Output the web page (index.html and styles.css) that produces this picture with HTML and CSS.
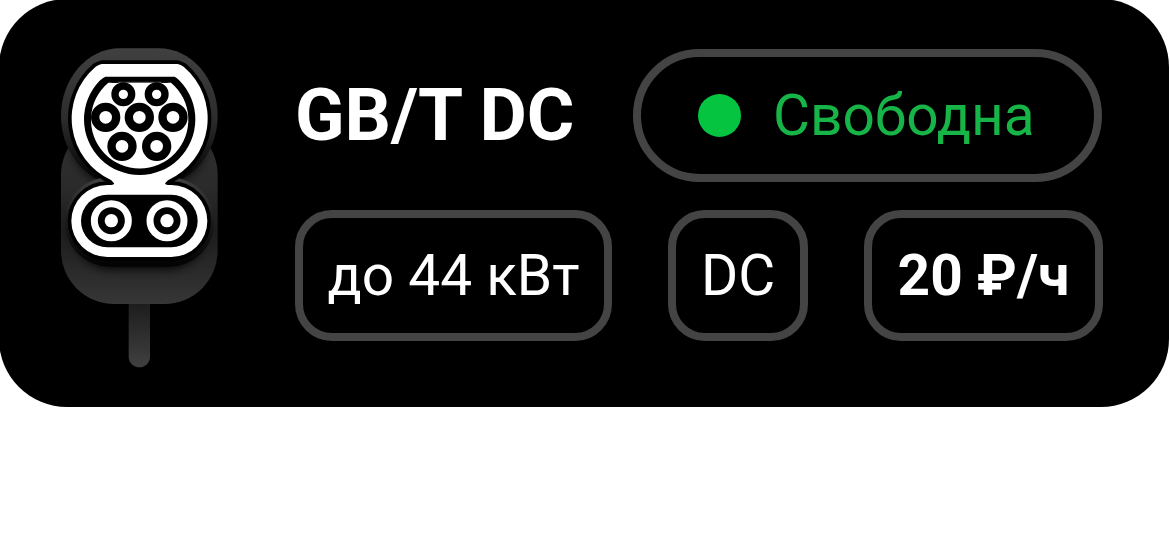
FILE: index.html
```
<!DOCTYPE html>
<html lang="ru">
<head>
    <meta charset="UTF-8">
    <meta name="viewport" content="width=device-width, initial-scale=1.0">
    <title>GB/T DC</title>
    <link rel="stylesheet" href="styles.css">
</head>
<body>
    <div class="card">
        <svg class="plug" viewBox="0 0 600 1020">
            <defs>
                <linearGradient id="head" x1="0" y1="0" x2="0" y2="1">
                    <stop offset="0" stop-color="#404040"/>
                    <stop offset="0.5" stop-color="#2c2c2c"/>
                    <stop offset="0.9" stop-color="#060606"/>
                </linearGradient>
                <linearGradient id="body" x1="0" y1="0" x2="0" y2="1">
                    <stop offset="0" stop-color="#303030"/>
                    <stop offset="0.35" stop-color="#2b2b2b"/>
                    <stop offset="0.6" stop-color="#1c1c1c"/>
                    <stop offset="1" stop-color="#363636"/>
                </linearGradient>
                <linearGradient id="plate" x1="0" y1="0" x2="0" y2="1">
                    <stop offset="0" stop-color="#404040"/>
                    <stop offset="0.5" stop-color="#1b1b1b"/>
                    <stop offset="1" stop-color="#020202"/>
                </linearGradient>
                <linearGradient id="cable" x1="0" y1="0" x2="0" y2="1">
                    <stop offset="0" stop-color="#1b1b1b"/>
                    <stop offset="1" stop-color="#404040"/>
                </linearGradient>
                <filter id="soft" x="-30%" y="-30%" width="160%" height="160%">
                    <feGaussianBlur stdDeviation="16"/>
                </filter>
                <clipPath id="bodyClip">
                    <rect x="63" y="245" width="470" height="547" rx="160"/>
                </clipPath>
            </defs>

            <!-- cable and body -->
            <path d="M266 780H330V950A32 32 0 0 1 266 950Z" fill="url(#cable)"/>
            <rect x="63" y="245" width="470" height="547" rx="160" fill="url(#body)"/>
            <g clip-path="url(#bodyClip)">
                <ellipse cx="298" cy="320" rx="195" ry="130" fill="#000" filter="url(#soft)"/>
                <rect x="105" y="470" width="386" height="215" rx="107" fill="#000" filter="url(#soft)"/>
            </g>
            <path d="M240 25H356C456 25 533 118 533 228C533 350 440 450 298 450C156 450 63 350 63 228C63 118 140 25 240 25Z" fill="url(#head)"/>
            <rect x="74" y="412" width="449" height="268" rx="134" fill="url(#plate)"/>

            <!-- socket shell -->
            <path class="shell" d="M185 72H413Q422 74 431 80A204 204 0 0 1 384 421L375 430Q376 435 384 435H394A108 108 0 0 1 394 651H202A108 108 0 0 1 202 435H214Q224 434 222 430L214 421A204 204 0 0 1 167 80Q176 74 185 72Z"/>
            <path d="M196 110H404Q412 114 419 122A167 167 0 1 1 179 122Q187 114 196 110Z"/>
            <path d="M205 128H393A146 146 0 1 1 205 128Z" fill="#fff"/>
            <path d="M215 121H383" stroke="#000" stroke-width="14"/>
            <path d="M234 127H364" stroke="#777" stroke-width="3"/>

            <!-- pins -->
            <g fill="#fff" stroke="#000">
                <g stroke-width="22">
                    <circle cx="250" cy="163" r="25"/>
                    <circle cx="350" cy="163" r="25"/>
                </g>
                <g stroke-width="25">
                    <circle cx="197" cy="232" r="31.5"/>
                    <circle cx="298" cy="232" r="31.5"/>
                    <circle cx="399" cy="232" r="31.5"/>
                    <circle cx="246" cy="319" r="31.5"/>
                    <circle cx="350" cy="319" r="31.5"/>
                </g>
            </g>

            <rect x="123" y="464" width="350" height="158" rx="79"/>
            <g stroke="#fff" stroke-width="21">
                <circle cx="214" cy="542" r="51"/>
                <circle cx="381" cy="542" r="51"/>
            </g>
            <circle cx="214" cy="542" r="20" fill="#fff"/>
            <circle cx="381" cy="542" r="20" fill="#fff"/>
        </svg>

        <div class="info">
            <div class="top">
                <h1>GB/T DC</h1>
                <div class="status">
                    <span class="dot"></span>
                    <span class="status-text">Свободна</span>
                </div>
            </div>
            <div class="chips">
                <div class="chip power"><span>до 44 кВт</span></div>
                <div class="chip current"><span>DC</span></div>
                <div class="chip price"><span>20 ₽/ч</span></div>
            </div>
        </div>
    </div>
</body>
</html>
```
FILE: styles.css
```
body {
    margin: 0;
    background-color: #fff;
    font-family: 'Roboto', sans-serif;
    overflow: hidden;
}

.card {
    display: flex;
    box-sizing: border-box;
    width: 1170px;
    height: 408px;
    margin: -1px 0 0 -1px;
    padding: 41px 66px 0 41px;
    border-radius: 68px;
    background-color: #000;
    color: #fff;
}

.plug {
    display: block;
    flex: none;
    width: 200px;
    height: 340px;
}

.shell {
    fill: #fff;
    stroke: #000;
    stroke-width: 22px;
    stroke-linejoin: round;
    paint-order: stroke;
}

.info {
    flex: 1;
    margin-left: 55px;
    padding-top: 9px;
}

.top {
    display: flex;
    align-items: center;
    justify-content: space-between;
    height: 133px;
}

h1 {
    margin: 0;
    font-size: 72.8px;
    font-weight: 700;
    line-height: 133px;
    white-space: nowrap;
}

.status {
    display: flex;
    align-items: center;
    box-sizing: border-box;
    width: 469px;
    height: 133px;
    margin-right: 1px;
    padding-left: 57px;
    border: 8px solid #444;
    border-radius: 67px;
    font-size: 56.8px;
    color: #17b548;
}

.dot {
    width: 43px;
    height: 43px;
    margin-right: 32px;
    border-radius: 50%;
    background-color: #04c440;
}

.status-text {
    white-space: nowrap;
}

.chips {
    display: flex;
    justify-content: space-between;
    margin-top: 28px;
}

.chip {
    display: flex;
    align-items: center;
    justify-content: center;
    box-sizing: border-box;
    height: 131px;
    border: 8px solid #444;
    border-radius: 37px;
    font-size: 56.8px;
    white-space: nowrap;
}

.power {
    width: 317px;
}

.current {
    width: 140px;
}

.price {
    width: 239px;
    font-weight: 700;
}
```
